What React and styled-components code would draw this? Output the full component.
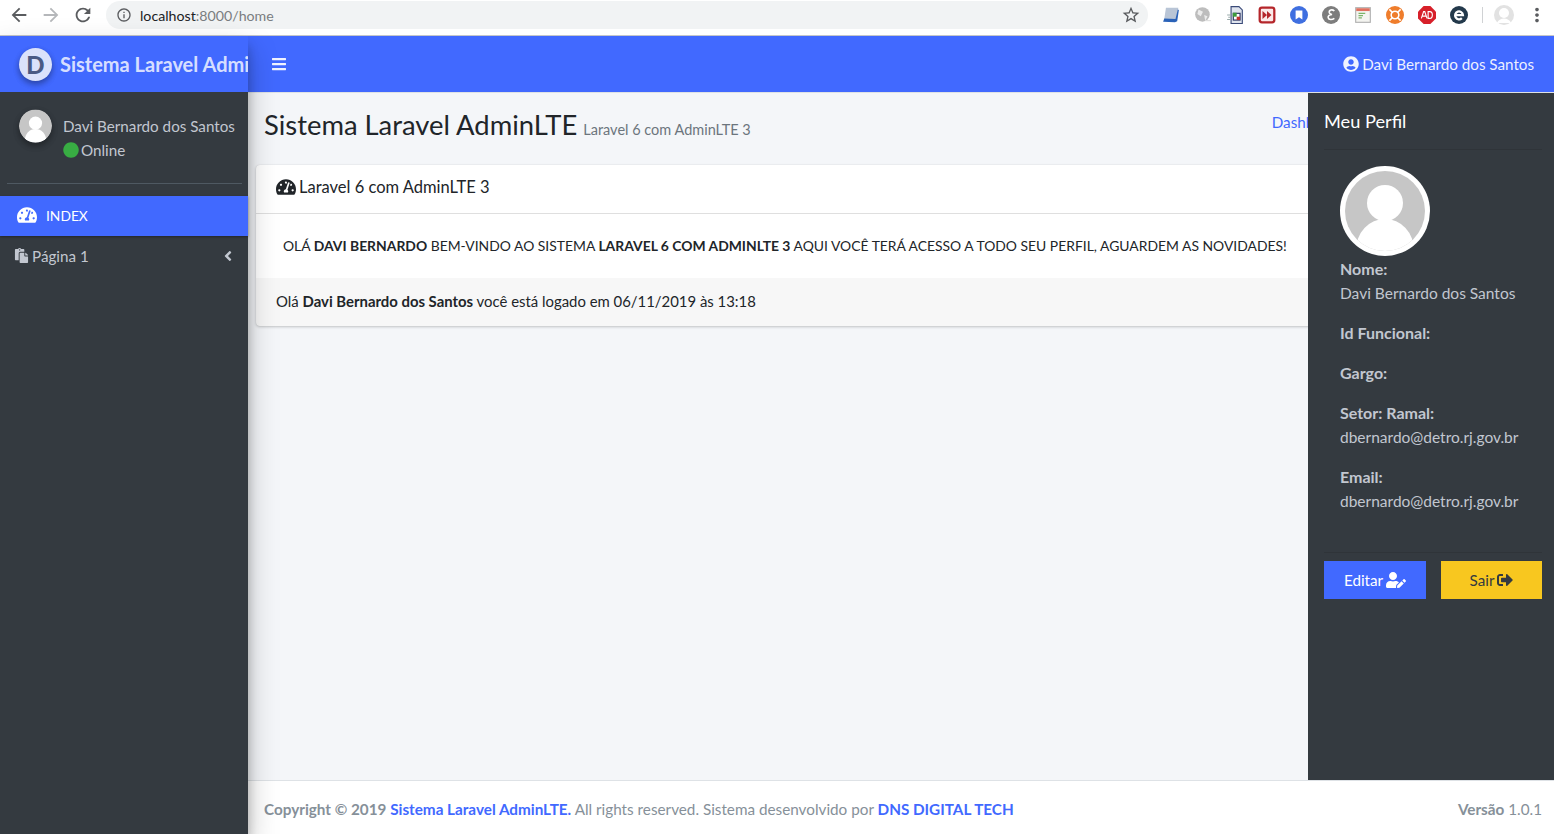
import React from 'react';
import styled, { createGlobalStyle } from 'styled-components';
import {
  FaTachometerAlt,
  FaPaste,
  FaUserCircle,
  FaBars,
  FaCircle,
  FaAngleLeft,
  FaUserEdit,
  FaSignOutAlt,
} from 'react-icons/fa';
import { MdArrowBack, MdArrowForward, MdRefresh, MdInfoOutline, MdStarBorder, MdMoreVert } from 'react-icons/md';

const GlobalStyle = createGlobalStyle`
  html, body { margin: 0; padding: 0; height: 100%; overflow: hidden; }
  body {
    font-family: Lato, "Open Sans", "Liberation Sans", sans-serif;
    font-size: 15.2px;
    color: #212529;
    background: #f4f6f9;
  }
  * { box-sizing: border-box; }
`;

const Shell = styled.div`
  width: 1554px;
  height: 834px;
  display: flex;
  flex-direction: column;
  overflow: hidden;
`;

/* browser toolbar */
const Chrome = styled.div`
  height: 36px;
  flex: none;
  display: flex;
  align-items: center;
  background: #fff;
  border-bottom: 1px solid #c4c6c9;
  padding: 0 0 5px 3px;
`;

const NavBtn = styled.span`
  width: 32px;
  flex: none;
  display: flex;
  justify-content: center;
  font-size: 22px;
  color: ${p => (p.$off ? '#b5b7ba' : '#5a5c5f')};
  svg { display: block; }
`;

const Omnibox = styled.div`
  width: 1042px;
  height: 28px;
  flex: none;
  margin-left: 7px;
  border-radius: 14px;
  background: #f1f3f4;
  display: flex;
  align-items: center;
  padding: 0 7px 0 10px;
  font-size: 14.2px;
  color: #7a7d80;
  svg { color: #5a5c5f; }
  b { font-weight: 400; color: #202124; margin-left: 8px; }
`;

const StarSlot = styled.span`
  margin-left: auto;
  display: flex;
  font-size: 20px;
`;

const Extensions = styled.div`
  display: flex;
  align-items: center;
  margin-left: 14px;
  gap: 14px;
`;

const Ext = styled.svg`
  width: 18px;
  height: 18px;
  flex: none;
  display: block;
`;

const Sep = styled.span`
  width: 1px;
  height: 16px;
  background: #d0d2d4;
`;

const ProfileDot = styled.svg`
  width: 20px;
  height: 20px;
  flex: none;
  margin-left: -3px;
`;

const MoreBtn = styled(MdMoreVert)`
  flex: none;
  margin-left: -2px;
  font-size: 22px;
  color: #5a5c5f;
`;

const Body = styled.div`
  flex: 1;
  display: flex;
  min-height: 0;
  position: relative;
`;

/* left column */
const Sidebar = styled.aside`
  width: 248px;
  flex: none;
  display: flex;
  flex-direction: column;
  background: #343a40;
  box-shadow: 0 14px 28px rgba(0, 0, 0, 0.25), 0 10px 10px rgba(0, 0, 0, 0.22);
  z-index: 3;
`;

const Brand = styled.div`
  height: 56px;
  flex: none;
  display: flex;
  align-items: center;
  padding-left: 19px;
  background: #4169ff;
  overflow: hidden;
  white-space: nowrap;
`;

const BrandLogo = styled.span`
  width: 33px;
  height: 33px;
  flex: none;
  border-radius: 50%;
  background: #dbe2fb;
  color: #4a5a84;
  font-weight: 900;
  font-size: 24px;
  line-height: 33px;
  text-align: center;
  box-shadow: 0 3px 6px rgba(0, 0, 0, 0.2), 0 3px 6px rgba(0, 0, 0, 0.2);
`;

const BrandText = styled.span`
  margin-left: 8px;
  font-size: 20px;
  font-weight: 700;
  color: rgba(255, 255, 255, 0.8);
`;

const UserPanel = styled.div`
  margin: 0 6px 0 7px;
  padding: 17px 0 0 12px;
  height: 92px;
  flex: none;
  display: flex;
  border-bottom: 1px solid #4f5962;
`;

const Avatar = styled.svg`
  width: 33px;
  height: 34px;
  flex: none;
  border-radius: 50%;
  box-shadow: 0 3px 6px rgba(0, 0, 0, 0.16), 0 3px 6px rgba(0, 0, 0, 0.23);
`;

const UserInfo = styled.div`
  margin-left: 11px;
  color: #c2c7d0;
  white-space: nowrap;
`;

const UserLine = styled.div`
  height: 24px;
  line-height: 24px;
  display: flex;
  align-items: center;
  &:first-child { margin-top: 5px; }
`;

const OnlineDot = styled(FaCircle)`
  color: #38ad43;
  font-size: 16px;
  margin-right: 2px;
`;

const Menu = styled.nav`
  margin-top: 12px;
`;

const MenuItem = styled.div`
  height: 40px;
  display: flex;
  align-items: center;
  color: ${p => (p.$active ? '#fff' : '#c2c7d0')};
  background: ${p => (p.$active ? '#4169ff' : 'transparent')};
  box-shadow: ${p => (p.$active ? '0 1px 3px rgba(0,0,0,.12), 0 1px 2px rgba(0,0,0,.24)' : 'none')};
  padding: ${p => (p.$active ? '0 12px 2px 17px' : '0 12px 1px 14px')};
  font-size: ${p => (p.$active ? '13.8px' : '15.2px')};
`;

const MenuIcon = styled.span`
  display: flex;
  font-size: ${p => (p.$wide ? '20px' : '15px')};
  margin-right: ${p => (p.$wide ? '9px' : '3px')};
`;

const MenuAngle = styled(FaAngleLeft)`
  margin-left: auto;
  font-size: 16px;
`;

/* main column */
const Column = styled.div`
  flex: 1;
  min-width: 0;
  display: flex;
  flex-direction: column;
`;

const Topbar = styled.header`
  height: 57px;
  flex: none;
  display: flex;
  align-items: center;
  justify-content: space-between;
  padding: 0 20px 1px 23px;
  background: #4169ff;
  border-bottom: 1px solid #dee2e6;
  color: rgba(255, 255, 255, 0.92);
`;

const TopUser = styled.span`
  display: flex;
  align-items: center;
  gap: 3px;
`;

const Burger = styled(FaBars)`
  font-size: 16px;
`;

const Content = styled.main`
  flex: 1;
  min-height: 0;
  padding: 0 8px;
  overflow: hidden;
  background: #f4f6f9;
`;

const PageHead = styled.div`
  height: 72px;
  display: flex;
  align-items: flex-start;
  padding: 14px 8px 0;
  white-space: nowrap;
`;

const PageTitle = styled.h1`
  margin: 0;
  font-size: 27.4px;
  line-height: 36px;
  font-weight: 400;
  color: #212529;
`;

const PageSub = styled.small`
  margin: 13px 0 0 6px;
  font-size: 14.5px;
  line-height: 20px;
  color: #6c757d;
`;

const Crumb = styled.span`
  margin: 5px 0 0 521px;
  line-height: 20px;
  color: #4169ff;
`;

const Card = styled.section`
  width: 1290px;
  background: #fff;
  border-radius: 4px;
  box-shadow: 0 0 1px rgba(0, 0, 0, 0.125), 0 1px 3px rgba(0, 0, 0, 0.2);
`;

const CardHead = styled.div`
  height: 49px;
  display: flex;
  align-items: center;
  gap: 3px;
  padding: 0 20px 5px;
  border-bottom: 1px solid rgba(0, 0, 0, 0.125);
  font-size: 16.5px;
`;

const CardBody = styled.div`
  height: 64px;
  display: flex;
  align-items: center;
  padding: 0 0 1px 27px;
  font-size: 13.9px;
  white-space: nowrap;
`;

const CardFoot = styled.div`
  height: 48px;
  display: flex;
  align-items: center;
  padding: 0 0 3px 20px;
  background: rgba(0, 0, 0, 0.03);
  border-radius: 0 0 4px 4px;
  font-size: 14.9px;
  white-space: pre;
`;

const Footer = styled.footer`
  height: 54px;
  flex: none;
  display: flex;
  align-items: center;
  justify-content: space-between;
  padding: 2px 12px 0 16px;
  background: #fff;
  border-top: 1px solid #dee2e6;
  color: #869099;
  font-size: 15.28px;
  white-space: pre;
  a { color: #4169ff; font-weight: 700; text-decoration: none; }
`;

/* right panel, sits over the content */
const ControlPanel = styled.aside`
  position: absolute;
  top: 57px;
  right: 0;
  bottom: 54px;
  width: 246px;
  padding: 0 12px 0 16px;
  background: #343a40;
  color: #c2c7d0;
  z-index: 2;
`;

const PanelTitle = styled.h5`
  margin: 0;
  height: 57px;
  line-height: 57px;
  border-bottom: 1px solid #2f3439;
  font-size: 18.2px;
  font-weight: 400;
  color: #fff;
`;

const PanelAvatar = styled.svg`
  display: block;
  width: 90px;
  height: 90px;
  margin: 16px 0 0 16px;
`;

const Details = styled.div`
  padding: 1px 0 0 16px;
  height: 297px;
  border-bottom: 1px solid #2f3439;
`;

const DetailGroup = styled.div`
  margin-bottom: 16px;
`;

const DetailLine = styled.div`
  height: 24px;
  line-height: 24px;
  font-size: ${p => (p.$label ? '16px' : '15.5px')};
  font-weight: ${p => (p.$label ? 700 : 400)};
  white-space: nowrap;
`;

const Actions = styled.div`
  display: grid;
  grid-template-columns: 102px 101px;
  justify-content: space-between;
  margin-top: 8px;
`;

const ActionBtn = styled.button`
  height: 38px;
  border: 0;
  padding: 0;
  display: flex;
  align-items: center;
  justify-content: center;
  gap: 3px;
  font: inherit;
  line-height: 36px;
  background: ${p => (p.$warn ? '#f8c71f' : '#4169ff')};
  color: ${p => (p.$warn ? '#343a40' : '#fff')};
`;

const AvatarArt = ({ as: Tag, ring }) => (
  <Tag viewBox="0 0 90 90">
    <defs>
      <clipPath id={ring ? 'clip-ring' : 'clip-plain'}>
        <circle cx="45" cy="45" r={ring ? 40 : 45} />
      </clipPath>
    </defs>
    {ring && <circle cx="45" cy="45" r="45" fill="#fff" />}
    <g clipPath={`url(#${ring ? 'clip-ring' : 'clip-plain'})`}>
      <rect width="90" height="90" fill="#c6c6c6" />
      <circle cx="45" cy="37" r="18" fill="#fff" />
      <ellipse cx="45" cy="84" rx="29" ry="31" fill="#fff" />
    </g>
  </Tag>
);

const extensions = [
  <Ext viewBox="0 0 16 16" key="a"><path d="M3.500 1.500h11l-1.500 10h-11z" fill="#b9c5d6" /><path d="M1 14l1-3 10 .5L14 3l1 .5-1.500 10-2 1z" fill="#2a62b8" /></Ext>,
  <Ext viewBox="0 0 16 16" key="b"><circle cx="7.500" cy="7.500" r="6.500" fill="#bdbdbd" /><path d="M4 3l4 2-2 4-3-2zM9 8l3 1-2 4z" fill="#ececec" /><path d="M10 13h5" stroke="#ddd" /></Ext>,
  <Ext viewBox="0 0 16 16" key="c"><path d="M4.500 .5h7l3 3v12h-10z" fill="#dfe4ee" stroke="#3a4a78" /><rect x="6.500" y="6.500" width="6" height="6" fill="#fff" stroke="#26305e" /><path d="M6 6h3.500v3.500H6z" fill="#3c9a3c" /><path d="M9.500 9.500h3v3h-3z" fill="#c03030" /><path d="M1 8h3M2 10h2M1 12h3" stroke="#9aa" /></Ext>,
  <Ext viewBox="0 0 16 16" key="d"><rect x="0.500" y="0.500" width="15" height="15" rx="3" fill="#b5262b" /><rect x="2.500" y="2.500" width="11" height="11" rx="1" fill="#fbeaea" /><path d="M4 4.500l4 3.500-4 3.500zM8 4.500l4 3.500-4 3.500z" fill="#b5262b" /></Ext>,
  <Ext viewBox="0 0 16 16" key="e"><circle cx="8" cy="8" r="8" fill="#3f6fe0" /><path d="M5 4h6v8L8 10l-3 2z" fill="#fff" /></Ext>,
  <Ext viewBox="0 0 16 16" key="f"><circle cx="8" cy="8" r="8" fill="#7d7d7d" /><path d="M11 4.500C9 2.500 6 3.500 6.500 6 7 7.500 8 7.500 9 7.500 7 7.500 5 8.500 5.500 10.500 6 12.500 9 12.500 11 11" fill="none" stroke="#fff" strokeWidth="1.400" /></Ext>,
  <Ext viewBox="0 0 16 16" key="g"><rect x="1.500" y="1.500" width="13" height="13" fill="#f4f4f0" stroke="#b0b0b0" /><path d="M2 2h12v2.500H2z" fill="#e0705f" /><path d="M4 6.500h6M4 8.500h4M4 10.500h3" stroke="#7cb46a" /></Ext>,
  <Ext viewBox="0 0 16 16" key="h"><circle cx="8" cy="8" r="8" fill="#ef7d2c" /><circle cx="8" cy="8" r="3.400" fill="none" stroke="#fff" strokeWidth="1.400" /><path d="M3 3l3 3M13 3l-3 3M3 13l3-3M13 13l-3-3" stroke="#fff" strokeWidth="1.400" /></Ext>,
  <Ext viewBox="0 0 16 16" key="i"><path d="M5 0h6l5 5v6l-5 5H5l-5-5V5z" fill="#d7202a" /><path d="M3 11l2-6h1l2 6M3.800 9h3.400M9 5v6h1.500c3 0 3-6 0-6z" fill="none" stroke="#fff" strokeWidth="1" /></Ext>,
  <Ext viewBox="0 0 16 16" key="j"><circle cx="8" cy="8" r="8" fill="#23394b" /><path d="M4.500 8h7a3.500 3.500 0 1 0-1 2.800" fill="none" stroke="#fff" strokeWidth="2" /></Ext>,
];

export default function App() {
  return (
    <Shell>
      <GlobalStyle />
      <Chrome>
        <NavBtn><MdArrowBack /></NavBtn>
        <NavBtn $off><MdArrowForward /></NavBtn>
        <NavBtn><MdRefresh /></NavBtn>
        <Omnibox>
          <MdInfoOutline size={16} />
          <b>localhost</b>:8000/home
          <StarSlot><MdStarBorder /></StarSlot>
        </Omnibox>
        <Extensions>
          {extensions}
          <Sep />
          <ProfileDot viewBox="0 0 20 20">
            <circle cx="10" cy="10" r="10" fill="#e2e2e2" />
            <circle cx="10" cy="8" r="5" fill="#fff" />
            <path d="M3 18c2-6 12-6 14 0z" fill="#fff" />
          </ProfileDot>
          <MoreBtn />
        </Extensions>
      </Chrome>
      <Body>
        <Sidebar>
          <Brand>
            <BrandLogo>D</BrandLogo>
            <BrandText>Sistema Laravel AdminLTE 3</BrandText>
          </Brand>
          <UserPanel>
            <AvatarArt as={Avatar} />
            <UserInfo>
              <UserLine>Davi Bernardo dos Santos</UserLine>
              <UserLine><OnlineDot />Online</UserLine>
            </UserInfo>
          </UserPanel>
          <Menu>
            <MenuItem $active>
              <MenuIcon $wide><FaTachometerAlt /></MenuIcon>
              INDEX
            </MenuItem>
            <MenuItem>
              <MenuIcon><FaPaste /></MenuIcon>
              Página 1
              <MenuAngle />
            </MenuItem>
          </Menu>
        </Sidebar>
        <Column>
          <Topbar>
            <Burger />
            <TopUser><FaUserCircle size={16} />Davi Bernardo dos Santos</TopUser>
          </Topbar>
          <Content>
            <PageHead>
              <PageTitle>Sistema Laravel AdminLTE</PageTitle>
              <PageSub>Laravel 6 com AdminLTE 3</PageSub>
              <Crumb>Dashboard</Crumb>
            </PageHead>
            <Card>
              <CardHead><FaTachometerAlt size={20} />Laravel 6 com AdminLTE 3</CardHead>
              <CardBody>
                <span>OLÁ <b>DAVI BERNARDO</b> BEM-VINDO AO SISTEMA <b>LARAVEL 6 COM ADMINLTE 3</b> AQUI VOCÊ TERÁ ACESSO A TODO SEU PERFIL, AGUARDEM AS NOVIDADES!</span>
              </CardBody>
              <CardFoot>
                <span>Olá <b>Davi Bernardo dos Santos</b> você está logado em 06/11/2019 às 13:18</span>
              </CardFoot>
            </Card>
          </Content>
          <Footer>
            <span><b>Copyright © 2019 <a href="#home">Sistema Laravel AdminLTE.</a></b> All rights reserved. Sistema desenvolvido por <a href="#dns">DNS DIGITAL TECH</a></span>
            <span><b>Versão</b> 1.0.1</span>
          </Footer>
        </Column>
        <ControlPanel>
          <PanelTitle>Meu Perfil</PanelTitle>
          <AvatarArt as={PanelAvatar} ring />
          <Details>
            <DetailGroup>
              <DetailLine $label>Nome:</DetailLine>
              <DetailLine>Davi Bernardo dos Santos</DetailLine>
            </DetailGroup>
            <DetailGroup><DetailLine $label>Id Funcional:</DetailLine></DetailGroup>
            <DetailGroup><DetailLine $label>Gargo:</DetailLine></DetailGroup>
            <DetailGroup>
              <DetailLine $label>Setor: Ramal:</DetailLine>
              <DetailLine>dbernardo@detro.rj.gov.br</DetailLine>
            </DetailGroup>
            <DetailGroup>
              <DetailLine $label>Email:</DetailLine>
              <DetailLine>dbernardo@detro.rj.gov.br</DetailLine>
            </DetailGroup>
          </Details>
          <Actions>
            <ActionBtn>Editar<FaUserEdit size={20} /></ActionBtn>
            <ActionBtn $warn>Sair<FaSignOutAlt size={16} /></ActionBtn>
          </Actions>
        </ControlPanel>
      </Body>
    </Shell>
  );
}
